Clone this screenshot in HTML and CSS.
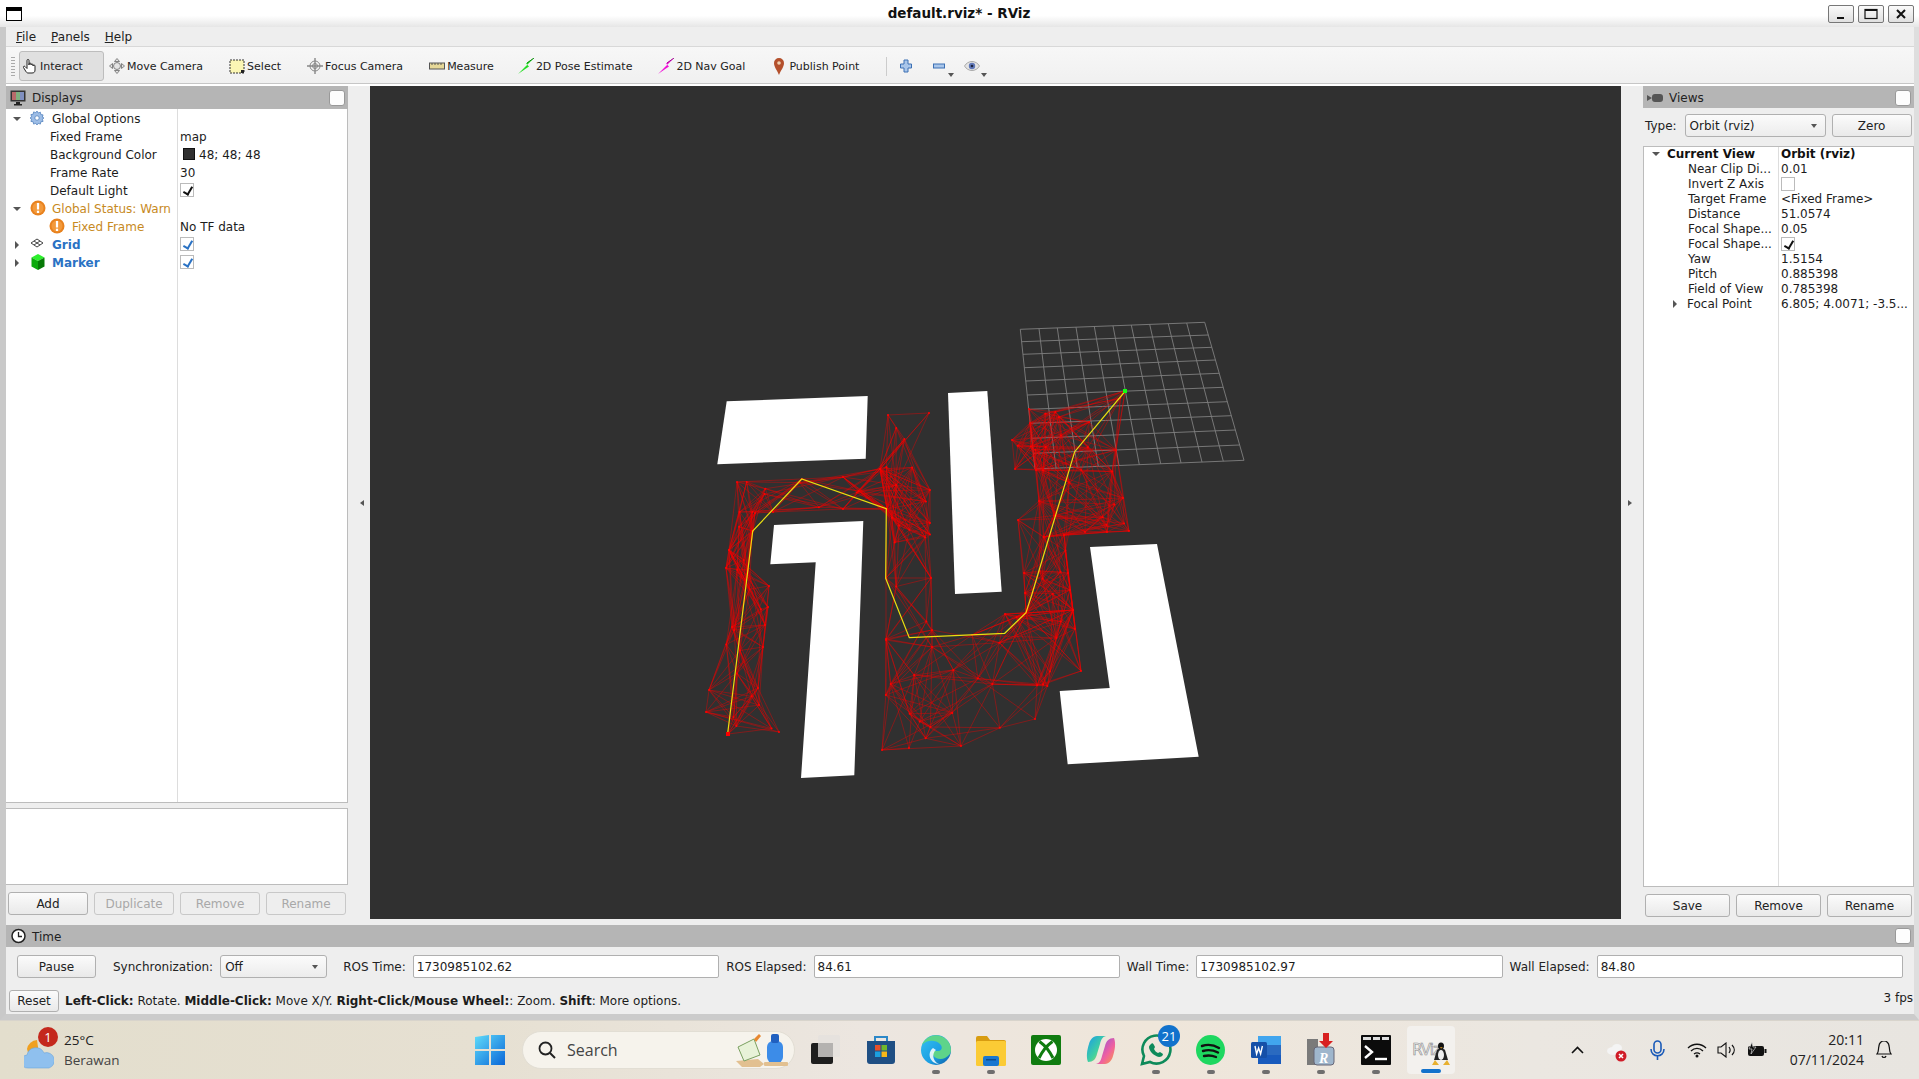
FILE: index.html
```html
<!DOCTYPE html>
<html lang="en">
<head>
<meta charset="utf-8">
<title>default.rviz* - RViz</title>
<link rel="stylesheet" href="styles.css">
</head>
<body>
<header class="titlebar">
  <span class="winicon"></span>
  <span class="wintitle">default.rviz* - RViz</span>
  <div class="winbtns">
    <span class="winbtn"><svg width="12" height="12" viewBox="0 0 12 12"><path d="M2 10h7" stroke="#111" stroke-width="2"/></svg></span>
    <span class="winbtn"><svg width="14" height="12" viewBox="0 0 14 12"><rect x="1" y="1.5" width="12" height="9" fill="none" stroke="#111" stroke-width="1.2"/><path d="M1 2h12" stroke="#111" stroke-width="2"/></svg></span>
    <span class="winbtn"><svg width="12" height="12" viewBox="0 0 12 12"><path d="M2 2l8 8M10 2l-8 8" stroke="#111" stroke-width="2"/></svg></span>
  </div>
</header>

<div class="window">
  <nav class="menubar">
    <span><u>F</u>ile</span><span><u>P</u>anels</span><span><u>H</u>elp</span>
  </nav>

  <div class="toolbar">
    <span class="grip"></span>
    <span class="tool active"><svg class="tic" viewBox="0 0 16 16"><path d="M5 8V2.500a1 1 0 0 1 2 0V7l0-1a1 1 0 0 1 2 0v1a1 1 0 0 1 2 0v1a1 1 0 0 1 2 0V12c0 2-1 3-3 3H6c-1 0-2-1-3-3L1.500 9.500c-.5-1 .7-1.800 1.500-1L5 10.500z" fill="#fff" stroke="#222" stroke-width="1"/></svg>Interact</span>
    <span class="tool"><svg class="tic" viewBox="0 0 16 16"><g fill="#e4e4e4" stroke="#777" stroke-width=".9"><path d="M8 .5l2.500 3h-5zM8 15.500l2.500-3h-5zM.5 8l3-2.500v5zM15.500 8l-3-2.500v5z"/><circle cx="8" cy="8" r="3.500"/></g></svg>Move Camera</span>
    <span class="tool"><svg class="tic" viewBox="0 0 16 16"><rect x="1" y="2" width="14" height="13" fill="#fbf6b4" stroke="#333" stroke-width="1" stroke-dasharray="2 1"/><rect x="12" y="12" width="3" height="3" fill="#222"/></svg>Select</span>
    <span class="tool"><svg class="tic" viewBox="0 0 16 16"><g fill="none" stroke="#888" stroke-width="1"><circle cx="8" cy="8" r="5"/><circle cx="8" cy="8" r="2.500"/><path d="M8 0v16M0 8h16" stroke-width="1.400"/></g></svg>Focus Camera</span>
    <span class="tool"><svg class="tic" viewBox="0 0 16 16"><rect x=".5" y="5" width="15" height="6" fill="#e6d898" stroke="#555"/><path d="M3 5v2M6 5v2M9 5v2M12 5v2" stroke="#555"/></svg>Measure</span>
    <span class="tool pose"><svg class="tic" viewBox="0 0 16 16"><path d="M16 0L7.500 8.500 0 16l8-5.500 3-2-3-3z" fill="#22dd22"/><path d="M16 0L9 5" stroke="#0a8a0a"/></svg>2D Pose Estimate</span>
    <span class="tool"><svg class="tic" viewBox="0 0 16 16"><path d="M16 0L7.500 8.500 0 16l8-5.500 3-2-3-3z" fill="#f010d8"/><path d="M16 0L9 5" stroke="#a00a90"/></svg>2D Nav Goal</span>
    <span class="tool pin"><svg class="tic" viewBox="0 0 16 18"><path d="M8 18C6 13 3 10 3 6a5 5 0 0 1 10 0c0 4-3 7-5 12z" fill="#b4502c"/><circle cx="8" cy="6" r="1.800" fill="#f0d0b0"/></svg>Publish Point</span>
    <span class="tsep"></span>
    <span class="vtool"><svg width="12" height="14" viewBox="0 0 12 14"><path d="M4 1h4v4h3.500v4H8v4H4V9H.5V5H4z" fill="#a9c6ea" stroke="#3c70b4"/></svg></span>
    <span class="vtool more"><svg width="12" height="6" viewBox="0 0 12 6"><rect x=".5" y="1" width="11" height="4" fill="#a9c6ea" stroke="#3c70b4"/></svg></span>
    <span class="vtool more wide"><svg width="16" height="12" viewBox="0 0 16 12"><path d="M.5 6C4 0 12 0 15.500 6 12 12 4 12 .5 6z" fill="#e4e4e4" stroke="#aaa"/><circle cx="8" cy="6" r="3.200" fill="#6078b8"/><circle cx="8" cy="6" r="1.300" fill="#1c2440"/></svg></span>
  </div>

  <div class="main">
    <section class="dock dock-left">
      <div class="dockhead">
        <svg class="headic" width="16" height="16" viewBox="0 0 16 16"><rect x=".5" y=".5" width="15" height="11" fill="#333"/><rect x="2" y="2" width="4" height="8" fill="#b86a6a"/><rect x="6" y="2" width="4" height="8" fill="#7fb07f"/><rect x="10" y="2" width="4" height="8" fill="#7f8fc0"/><path d="M6 12h4v2h2v1.500H4V14h2z" fill="#222"/></svg>
        <span class="headtext">Displays</span>
        <span class="floatbox"></span>
      </div>
      <div class="tree tree-left">
        <div class="nm lv0"><i class="exp open"></i><svg class="ric" viewBox="0 0 14 14"><path d="M7 0l1.200 2 2.200-.8.400 2.300 2.300.4-.8 2.200L14 7l-1.700 1.200.8 2.200-2.300.4-.4 2.300-2.200-.8L7 14l-1.200-1.700-2.200.8-.4-2.300-2.300-.4.8-2.200L0 7l1.700-1.200-.8-2.200 2.300-.4.4-2.300 2.200.8z" fill="#9dbde6" stroke="#4678b8" stroke-width=".7"/><circle cx="7" cy="7" r="2.200" fill="#fff" stroke="#4678b8" stroke-width=".7"/></svg>Global Options</div><div class="val"></div>
        <div class="nm lv1">Fixed Frame</div><div class="val">map</div>
        <div class="nm lv1">Background Color</div><div class="val"><span class="swatch"></span>48; 48; 48</div>
        <div class="nm lv1">Frame Rate</div><div class="val">30</div>
        <div class="nm lv1">Default Light</div><div class="val"><span class="cb ck"></span></div>
        <div class="nm lv0 warn"><i class="exp open"></i><svg class="ric big" viewBox="0 0 16 16"><circle cx="8" cy="8" r="7.500" fill="#e8821e"/><circle cx="8" cy="8" r="5.500" fill="#f39a3c"/><rect x="6.900" y="3" width="2.200" height="6.500" fill="#fff"/><rect x="6.900" y="10.700" width="2.200" height="2.300" fill="#fff"/></svg>Global Status: Warn</div><div class="val"></div>
        <div class="nm lv2 warn"><svg class="ric big" viewBox="0 0 16 16"><circle cx="8" cy="8" r="7.500" fill="#e8821e"/><circle cx="8" cy="8" r="5.500" fill="#f39a3c"/><rect x="6.900" y="3" width="2.200" height="6.500" fill="#fff"/><rect x="6.900" y="10.700" width="2.200" height="2.300" fill="#fff"/></svg>Fixed Frame</div><div class="val">No TF data</div>
        <div class="nm lv0 link"><i class="exp"></i><svg class="ric" viewBox="0 0 14 14"><g fill="none" stroke="#444" stroke-width="1"><path d="M7 2l6 4-6 4-6-4z"/><path d="M4 4l6 4M10 4L4 8"/></g></svg>Grid</div><div class="val"><span class="cb ck blue"></span></div>
        <div class="nm lv0 link"><i class="exp"></i><svg class="ric big" viewBox="0 0 14 16"><path d="M7 0l6.500 3.500L7 7 .5 3.500z" fill="#2cf02c"/><path d="M.5 3.500L7 7v9L.5 12.500z" fill="#0caa0c"/><path d="M13.500 3.500L7 7v9l6.500-3.500z" fill="#067a06"/></svg>Marker</div><div class="val"><span class="cb ck blue"></span></div>
      </div>
      <div class="split-h"></div>
      <div class="descbox"></div>
      <div class="btnrow">
        <span class="btn">Add</span><span class="btn off">Duplicate</span><span class="btn off">Remove</span><span class="btn off">Rename</span>
      </div>
    </section>

    <div class="handle hl"><i class="arrow-l"></i></div>

    <div class="view">
      <svg class="scene" viewBox="370 86 1251 833" width="1251" height="833">
        <g id="grid"></g>
        <g fill="#fff">
          <polygon points="726.700,401.300 867.700,396 865.700,458.700 717.300,464.300"/>
          <polygon points="774,525 863.300,521 854.300,775.300 801,778 815.700,562.300 770.300,564.300"/>
          <polygon points="948,393 987.300,391 1001.700,591.700 955,594"/>
          <polygon points="1090,547 1157,544 1198.700,756.700 1067.700,764.300 1059.700,691 1109.700,688"/>
        </g>
        <g id="mesh"></g>
        <polyline id="route" points="727.700,733.300 752.700,531 801.700,479 886.300,508.700 885.700,578.300 909.300,637.700 1004.700,633.300 1026,612.700 1031.700,595 1074.700,451.700 1125.300,391"/>
        <rect x="726" y="732" width="4" height="4" fill="#f00"/>
        <rect x="1123" y="389" width="4" height="4" fill="#1f1"/>
      </svg>
    </div>

    <div class="handle hr"><i class="arrow-r"></i></div>

    <section class="dock dock-right">
      <div class="dockhead short">
        <svg class="headic viewsic" width="16" height="8" viewBox="0 0 16 8"><path d="M0 1l5 3-5 3z" fill="#555"/><rect x="5" y="0" width="11" height="8" rx="3" fill="#555"/></svg>
        <span class="headtext">Views</span>
        <span class="floatbox"></span>
      </div>
      <div class="typerow">
        <span class="lbl">Type:</span>
        <span class="combo wide">Orbit (rviz)<i class="caret"></i></span>
        <span class="btn zero">Zero</span>
      </div>
      <div class="tree tree-right">
        <div class="nm rl0 strong"><i class="exp open"></i>Current View</div><div class="val strong">Orbit (rviz)</div>
        <div class="nm rl1">Near Clip Di...</div><div class="val">0.01</div>
        <div class="nm rl1">Invert Z Axis</div><div class="val"><span class="cb"></span></div>
        <div class="nm rl1">Target Frame</div><div class="val">&lt;Fixed Frame&gt;</div>
        <div class="nm rl1">Distance</div><div class="val">51.0574</div>
        <div class="nm rl1">Focal Shape...</div><div class="val">0.05</div>
        <div class="nm rl1">Focal Shape...</div><div class="val"><span class="cb ck"></span></div>
        <div class="nm rl1">Yaw</div><div class="val">1.5154</div>
        <div class="nm rl1">Pitch</div><div class="val">0.885398</div>
        <div class="nm rl1">Field of View</div><div class="val">0.785398</div>
        <div class="nm rl1 sub"><i class="exp"></i>Focal Point</div><div class="val">6.805; 4.0071; -3.5...</div>
      </div>
      <div class="btnrow right">
        <span class="btn">Save</span><span class="btn">Remove</span><span class="btn">Rename</span>
      </div>
    </section>
  </div>

  <section class="timepanel">
    <div class="timehead">
      <svg class="clock" width="15" height="16" viewBox="0 0 15 16"><circle cx="7.500" cy="8" r="6.500" fill="#fff" stroke="#222" stroke-width="1.500"/><path d="M7.500 4v4.500H11" fill="none" stroke="#222" stroke-width="1.300"/></svg>
      <span class="headtext">Time</span>
      <span class="floatbox"></span>
    </div>
    <div class="timerow">
      <span class="btn pause">Pause</span>
      <span class="lbl sync">Synchronization:</span>
      <span class="combo sel">Off<i class="caret"></i></span>
      <span class="lbl ros">ROS Time:</span><span class="input">1730985102.62</span>
      <span class="lbl">ROS Elapsed:</span><span class="input">84.61</span>
      <span class="lbl">Wall Time:</span><span class="input">1730985102.97</span>
      <span class="lbl">Wall Elapsed:</span><span class="input">84.80</span>
    </div>
    <div class="hintrow">
      <span class="btn reset">Reset</span>
      <span class="hint"><b>Left-Click:</b> Rotate. <b>Middle-Click:</b> Move X/Y. <b>Right-Click/Mouse Wheel:</b>: Zoom. <b>Shift</b>: More options.</span>
      <span class="fps">3 fps</span>
    </div>
  </section>
</div>

<footer class="taskbar">
  <div class="weather">
    <div class="wicon">
      <svg width="30" height="36" viewBox="0 0 30 36"><path d="M3 14a11 11 0 0 1 10-9l2 14-10 2z" fill="#f0a020"/><path d="M4 33a6.500 6.500 0 0 1-1-13 9 9 0 0 1 17-2 7.500 7.500 0 0 1 5 15z" fill="#8fc0ee" stroke="#6aa4dc" stroke-width=".6"/></svg>
      <span class="wbadge">1</span>
    </div>
    <div class="wtext"><span>25°C</span><span class="wsub">Berawan</span></div>
  </div>
  <svg class="startlogo" width="30" height="30" viewBox="0 0 30 30"><defs><linearGradient id="wg" x1="0" y1="0" x2="1" y2="1"><stop offset="0" stop-color="#5fdcfa"/><stop offset="1" stop-color="#0a66d8"/></linearGradient></defs><path d="M0 2l14-2v14H0zM16 0l14 0v14H16zM0 16h14v14H0zM16 16h14v14H16z" fill="url(#wg)"/></svg>
  <div class="searchpill">
    <svg width="18" height="18" viewBox="0 0 18 18"><circle cx="7.500" cy="7.500" r="6" fill="none" stroke="#222" stroke-width="1.800"/><path d="M12 12l5 5" stroke="#222" stroke-width="2"/></svg>
    <span class="searchtext">Search</span>
    <svg class="searchart" width="54" height="34" viewBox="0 0 54 34"><path d="M0 28l22-2 6 5-4 3H6z" fill="#e2c090"/><path d="M2 14l16-8 6 16-16 6z" fill="#e8f2d8" stroke="#7aa060"/><path d="M18 6l5-5 2 2-5 6z" fill="#e88830"/><rect x="31" y="8" width="16" height="22" rx="6" fill="#3c8ce8"/><rect x="35" y="1" width="8" height="9" rx="2" fill="#2060c0"/><rect x="28" y="29" width="24" height="4" rx="1" fill="#e2c090"/></svg>
  </div>
  <div class="apps">
    <span class="app"><svg width="30" height="30" viewBox="0 0 30 30"><rect x="7" y="0" width="22" height="22" rx="2" fill="#e6e2de"/><rect x="0" y="8" width="22" height="21" rx="2" fill="#1e1e1e"/><rect x="7" y="8" width="15" height="14" fill="#b4b2b0"/></svg></span>
    <span class="app"><svg width="30" height="30" viewBox="0 0 30 30"><path d="M9 6V2h12v4" fill="none" stroke="#2c88c8" stroke-width="2"/><path d="M1 6h28v20a3 3 0 0 1-3 3H4a3 3 0 0 1-3-3z" fill="#1f4f84"/><rect x="9" y="10" width="5.500" height="5.500" fill="#e8502a"/><rect x="15.500" y="10" width="5.500" height="5.500" fill="#72b82c"/><rect x="9" y="16.500" width="5.500" height="5.500" fill="#1ca0e0"/><rect x="15.500" y="16.500" width="5.500" height="5.500" fill="#f8b818"/></svg></span>
    <span class="app dot"><svg width="32" height="32" viewBox="0 0 32 32"><defs><linearGradient id="eg" x1="0" y1="0" x2="1" y2="1"><stop offset="0" stop-color="#35c1f1"/><stop offset=".6" stop-color="#1b9de2"/><stop offset="1" stop-color="#0c59a4"/></linearGradient></defs><circle cx="16" cy="16" r="15" fill="url(#eg)"/><path d="M31 16a15 15 0 0 0-29-5c4-5 13-6 18-1 3 3 2 7-2 7H14c-2 0-2 2-1 4 2 4 8 5 12 3 4-2 6-5 6-8z" fill="#5ed48a"/><path d="M13 14c-4 3-5 9 0 14 2 1 4 2 6 2-7-3-7-11-3-14z" fill="#fff" opacity=".85"/></svg></span>
    <span class="app dot"><svg width="30" height="32" viewBox="0 0 30 32"><path d="M0 4a2 2 0 0 1 2-2h9l3 4h14a2 2 0 0 1 2 2v4H0z" fill="#d89c10"/><rect y="7" width="30" height="25" rx="1.500" fill="#fbcb35"/><rect x="7" y="22" width="16" height="10" rx="2" fill="#1a78d0"/><rect x="10" y="25" width="10" height="1.500" fill="#0d4c90"/></svg></span>
    <span class="app"><svg width="30" height="30" viewBox="0 0 30 30"><rect width="30" height="30" rx="2" fill="#107c10"/><circle cx="15" cy="15" r="11" fill="#fff"/><path d="M8.500 6.500C12 9 18 15 22 23M21.500 6.500C18 9 12 15 8 23" fill="none" stroke="#107c10" stroke-width="3"/></svg></span>
    <span class="app"><svg width="30" height="30" viewBox="0 0 30 30"><defs><linearGradient id="cg1" x1="0" y1="0" x2="1" y2="1"><stop offset="0" stop-color="#1a9ce8"/><stop offset=".55" stop-color="#40d0a0"/><stop offset="1" stop-color="#f0d030"/></linearGradient><linearGradient id="cg2" x1="0" y1="0" x2="1" y2="1"><stop offset="0" stop-color="#7a50e8"/><stop offset=".6" stop-color="#f060a0"/><stop offset="1" stop-color="#f8a040"/></linearGradient></defs><path d="M11 1h9c-4 1-5 4-6 8l-3 10c-1 5-4 8-9 8-2-5-1-12 1-18 1-4 4-8 8-8z" fill="url(#cg1)"/><path d="M19 29h-9c4-1 5-4 6-8l3-10c1-5 4-8 9-8 2 5 1 12-1 18-1 4-4 8-8 8z" fill="url(#cg2)"/></svg></span>
    <span class="app dot wa"><svg width="32" height="32" viewBox="0 0 32 32"><path d="M2 30l2-8a14 14 0 1 1 6 6z" fill="none" stroke="#0e8a5a" stroke-width="2.600"/><path d="M11 10c1-1 2-1 3 1l1 2-1 2c1 2 2 3 4 4l2-1 3 2c0 2-2 3-4 3-5-1-10-6-10-10 0-1 1-2 2-3z" fill="#0e8a5a"/></svg><span class="wabadge">21</span></span>
    <span class="app dot"><svg width="29" height="30" viewBox="0 0 29 30"><ellipse cx="14.500" cy="15" rx="14.500" ry="15" fill="#1ed760"/><path d="M6 11c6-2 12-1 17 2M7 16c5-1.500 10-1 15 1.500M8 21c4-1 8-.7 12 1" fill="none" stroke="#111" stroke-width="2.400" stroke-linecap="round"/></svg></span>
    <span class="app dot"><svg width="30" height="30" viewBox="0 0 30 30"><rect x="7" y="1" width="23" height="28" rx="1.500" fill="#2a6ac0"/><rect x="7" y="1" width="23" height="9" fill="#41a5ee"/><rect x="7" y="20" width="23" height="9" fill="#185abd"/><rect x="0" y="7" width="16" height="16" rx="1.500" fill="#1550a8"/><path d="M3 11l1.600 8 2-6 2 6 1.800-8" fill="none" stroke="#fff" stroke-width="1.400" transform="translate(1 0)"/></svg></span>
    <span class="app dot"><svg width="30" height="34" viewBox="0 0 30 34"><rect x="1" y="6" width="11" height="26" fill="#7a7a7a"/><rect x="8" y="14" width="20" height="18" rx="3" fill="#9fb6cc" stroke="#667"/><path d="M17 0h6v8h4l-7 7-7-7h4z" fill="#d82020"/><text x="13" y="30" class="rmark">R</text></svg></span>
    <span class="app dot"><svg width="30" height="30" viewBox="0 0 30 30"><rect width="30" height="30" rx="1" fill="#0c0c0c"/><rect x="2" y="2" width="8" height="3" fill="#ddd"/><rect x="12" y="2" width="7" height="3" fill="#ddd"/><rect x="21" y="2" width="7" height="3" fill="#ddd"/><path d="M4 11l7 6-7 6" fill="none" stroke="#fff" stroke-width="2.400"/><path d="M14 24h12" stroke="#fff" stroke-width="2.400"/></svg></span>
    <span class="app current"><span class="rvizword">RViz</span><svg class="tux" width="18" height="24" viewBox="0 0 18 24"><ellipse cx="9" cy="4" rx="3" ry="3.500" fill="#111"/><path d="M5 8c2-2 6-2 8 0l3 10H2z" fill="#222"/><ellipse cx="9" cy="13" rx="3" ry="5" fill="#eee"/><path d="M8 5l3 .5-2 1z" fill="#e8a020"/><path d="M3 18L0 23h7zM15 18l3 5h-7z" fill="#e8b030"/></svg><span class="underline"></span></span>
  </div>
  <div class="tray">
    <svg class="tr-chev" width="13" height="8" viewBox="0 0 13 8"><path d="M1 7l5.500-5.500L12 7" fill="none" stroke="#111" stroke-width="1.600"/></svg>
    <svg class="tr-cloud" width="20" height="18" viewBox="0 0 20 18"><ellipse cx="6" cy="7" rx="6" ry="4" fill="#f4f4f4"/><ellipse cx="10" cy="4" rx="5" ry="4" fill="#f4f4f4"/><circle cx="14" cy="12" r="5.500" fill="#d01c28"/><path d="M12 10l4 4M16 10l-4 4" stroke="#fff" stroke-width="1.500"/></svg>
    <svg class="tr-mic" width="15" height="20" viewBox="0 0 15 20"><rect x="4" y="1" width="7" height="12" rx="3.500" fill="none" stroke="#1a5ab8" stroke-width="1.600"/><path d="M1 9c0 9 13 9 13 0M7.500 15v5" fill="none" stroke="#1a5ab8" stroke-width="1.600"/></svg>
    <svg class="tr-wifi" width="20" height="16" viewBox="0 0 20 16"><path d="M1 6c5-5 13-5 18 0M4 9c3.500-3.500 8.500-3.500 12 0M7 12c2-1.500 4-1.500 6 0" fill="none" stroke="#111" stroke-width="1.300"/><circle cx="10" cy="14" r="1.500" fill="#111"/></svg>
    <svg class="tr-vol" width="20" height="16" viewBox="0 0 20 16"><path d="M1 5h3l5-4v14l-5-4H1z" fill="none" stroke="#111" stroke-width="1.100"/><path d="M12 5c1.500 2 1.500 4 0 6M15 3c3 3 3 7 0 10" fill="none" stroke="#111" stroke-width="1.200"/></svg>
    <svg class="tr-bat" width="20" height="16" viewBox="0 0 20 16"><rect x="1" y="4" width="16" height="10" rx="2" fill="#111"/><rect x="17.500" y="7" width="2" height="4" fill="#111"/><path d="M5 0L2 7h3l-1 5 5-7H6z" fill="#111" stroke="#eee" stroke-width=".6"/></svg>
    <div class="clocktext"><span>20:11</span><span>07/11/2024</span></div>
    <svg class="tr-bell" width="16" height="18" viewBox="0 0 16 18"><path d="M1 13c2-2 1-5 2-8a5 5 0 0 1 10 0c1 3 0 6 2 8z" fill="none" stroke="#111" stroke-width="1.200"/><path d="M6 15c.5 2 3.500 2 4 0" fill="none" stroke="#111" stroke-width="1.200"/></svg>
  </div>
</footer>
<script src="script.js"></script>
</body>
</html>
```

FILE: styles.css
```css
* { box-sizing: border-box; }
html, body { margin: 0; height: 100%; overflow: hidden; }
body {
  width: 1919px;
  height: 1079px;
  display: flex;
  flex-direction: column;
  font: 12px/1 "DejaVu Sans", sans-serif;
  color: #1c1c1c;
  background: #eee;
}

/* title bar */
.titlebar {
  height: 27px;
  flex: none;
  display: flex;
  align-items: center;
  justify-content: space-between;
  padding: 0 5px 0 6px;
  background: linear-gradient(#fff 0, #fff 58%, #e6e6e6 100%);
}
.winicon {
  width: 16px;
  height: 14px;
  border: 1px solid #000;
  border-top-width: 4px;
  background: #fff;
  margin-top: 1px;
}
.wintitle {
  font-weight: bold;
  font-size: 13.500px;
  color: #111;
  margin-left: 68px;
  padding-top: 1px;
}
.winbtns { display: flex; gap: 4px; margin-top: 1px; }
.winbtn {
  width: 26px;
  height: 18px;
  border: 1px solid #777;
  border-radius: 2px;
  background: linear-gradient(#fafafa, #e0e0e0);
  display: flex;
  align-items: center;
  justify-content: center;
}

/* window frame */
.window {
  height: 993px;
  flex: none;
  display: flex;
  flex-direction: column;
  border-left: 6px solid #c9c9c9;
  border-right: 5px solid #dedede;
  border-bottom: 6px solid #cbcbcb;
  background: #eee;
}
.menubar {
  height: 20px;
  flex: none;
  display: flex;
  align-items: center;
  padding: 1px 0 0 10px;
  border-bottom: 1px solid #d8d8d8;
}
.menubar span { margin-right: 15px; color: #222; }
.toolbar {
  height: 39px;
  flex: none;
  display: flex;
  align-items: center;
  padding: 1px 0 0 5px;
  background: linear-gradient(#f7f7f7, #f0f0f0);
  border-bottom: 2px solid #fff;
  box-shadow: inset 0 -1px 0 #c6c6c6;
}
.grip {
  width: 4px;
  height: 20px;
  margin-right: 4px;
  background: radial-gradient(circle, #aaa 0.6px, transparent 0.8px) 0 0 / 2px 3px;
}
.tool {
  display: flex;
  align-items: center;
  gap: 2px;
  height: 30px;
  padding: 0 26px 0 0;
  color: #222;
  font-size: 11px;
}
.tool.pose { margin-left: -2px; }
.tool.active {
  background: #e0e0e0;
  border: 1px solid #bdbdbd;
  border-radius: 3px;
  padding: 0 20px 0 2px;
  margin-right: 5px;
}
.tic { width: 16px; height: 16px; flex: none; }
.pin .tic { height: 18px; }
.tsep { width: 1px; height: 19px; background: #ccc; margin: 0 13px 0 1px; }
.vtool {
  width: 33px;
  display: flex;
  position: relative;
  height: 20px;
  align-items: center;
}
.vtool.wide { margin-left: -2px; }
.vtool.more::after {
  content: "";
  position: absolute;
  left: 15px;
  bottom: -1px;
  border: 3px solid transparent;
  border-top: 4px solid #555;
  border-bottom: 0;
}
.vtool.wide::after { left: 17px; }

/* main area */
.main {
  height: 839px;
  flex: none;
  display: flex;
  align-items: flex-start;
}
.dock { display: flex; flex-direction: column; height: 100%; }
.dock-left { width: 342px; }
.dock-right { width: 271px; }
.dockhead, .timehead {
  height: 23px;
  flex: none;
  display: flex;
  align-items: center;
  background: #b5b5b5;
  padding: 1px 3px 0 4px;
  color: #222;
}
.dockhead.short { height: 22px; padding-top: 2px; }
.dockhead .floatbox, .timehead .floatbox { margin-top: -1px; }
.headic { flex: none; margin-right: 6px; }
.headtext { flex: 1; }
.floatbox {
  width: 16px;
  height: 16px;
  background: #fdfdfd;
  border: 1px solid #999;
  border-radius: 3px;
}
.tree {
  display: grid;
  align-content: start;
  background-color: #fff;
  background-repeat: no-repeat;
  border: 1px solid #bcbcbc;
}
.tree-left {
  height: 694px;
  flex: none;
  grid-template-columns: 171px 1fr;
  grid-auto-rows: 18px;
  border-width: 0 1px 1px 0;
  background-image: linear-gradient(#ddd, #ddd);
  background-size: 1px 100%;
  background-position: 171px 0;
}
.tree-left .nm, .tree-left .val { padding-top: 2px; }
.tree-left .cb { margin-top: -3px; }
.tree-right {
  height: 741px;
  flex: none;
  grid-template-columns: 134px 1fr;
  grid-auto-rows: 15px;
  background-image: linear-gradient(#ddd, #ddd);
  background-size: 1px 100%;
  background-position: 134px 0;
}
.tree-right .nm, .tree-right .val { margin-top: -1px; }
.tree-right .cb { margin-top: -1px; }
.nm { display: flex; align-items: center; white-space: nowrap; position: relative; }
.val { display: flex; align-items: center; padding-left: 3px; white-space: nowrap; }
.lv0 { padding-left: 7px; }
.lv1 { padding-left: 44px; }
.lv2 { padding-left: 42px; }
.warn { color: #c78a1e; }
.link { color: #2a72c4; font-weight: bold; }
.strong { font-weight: bold; color: #111; }
.exp {
  width: 8px;
  height: 8px;
  flex: none;
  margin-right: 8px;
  position: relative;
}
.exp::before {
  content: "";
  position: absolute;
  left: 2px;
  top: 0;
  border: 4px solid transparent;
  border-left: 4px solid #555;
  border-right: 0;
}
.exp.open::before {
  left: 0;
  top: 2px;
  border: 4px solid transparent;
  border-top: 4px solid #555;
  border-bottom: 0;
}
.ric { width: 14px; height: 14px; flex: none; margin: -2px 8px 0 1px; }
.ric.big { width: 16px; height: 16px; margin: -2px 6px 0 1px; }
.lv2 .ric.big { margin-right: 7px; }
.swatch {
  width: 12px;
  height: 12px;
  background: #303030;
  border: 1px solid #111;
  margin: -2px 4px 0 3px;
}
.cb {
  width: 14px;
  height: 14px;
  border: 1px solid #bbb;
  background: #fff;
  position: relative;
  display: block;
}
.cb.ck::after {
  content: "";
  position: absolute;
  left: 4px;
  top: 1px;
  width: 4px;
  height: 8px;
  border: solid #111;
  border-width: 0 2px 2px 0;
  transform: rotate(30deg);
}
.cb.ck.blue::after { border-color: #2a72c4; }
.rl0 { padding-left: 8px; }
.rl0 .exp { margin-right: 7px; }
.rl1 { padding-left: 44px; }
.rl1.sub { padding-left: 27px; }
.rl1.sub .exp { margin-right: 8px; }
.split-h { height: 5px; flex: none; }
.descbox { height: 77px; flex: none; background: #fff; border: 1px solid #bcbcbc; border-left: 0; }
.btnrow {
  display: flex;
  gap: 6px;
  margin-top: 7px;
  padding: 0 2px;
  height: 23px;
  flex: none;
}
.btnrow .btn { flex: 1; }
.btn {
  display: flex;
  align-items: center;
  justify-content: center;
  border: 1px solid #b0b0b0;
  border-radius: 3px;
  background: linear-gradient(#fbfbfb, #e9e9e9);
  color: #222;
}
.btn.off { color: #a8a8a8; border-color: #c8c8c8; background: #eee; }
.handle {
  height: 100%;
  flex: none;
  display: flex;
  align-items: center;
  justify-content: center;
  padding-bottom: 6px;
}
.hl { width: 22px; padding-left: 6px; }
.hr { width: 22px; padding-right: 5px; }
.arrow-l, .arrow-r { display: block; border: 3.500px solid transparent; }
.arrow-l { border-right: 4px solid #555; border-left: 0; }
.arrow-r { border-left: 4px solid #555; border-right: 0; }
.view { width: 1251px; height: 833px; flex: none; background: #303030; }
.scene { display: block; }
#route { fill: none; stroke: #eadf10; stroke-width: 1.200; }
.gl { stroke: #7f7f7f; stroke-width: .9; }
.ml { stroke: #f00000; stroke-opacity: .6; stroke-width: .7; }
.mn { fill: #ff0000; }

.typerow {
  display: flex;
  align-items: center;
  height: 23px;
  margin: 6px 2px 9px 2px;
}
.lbl { color: #222; white-space: nowrap; }
.combo {
  display: flex;
  align-items: center;
  justify-content: space-between;
  height: 23px;
  padding: 0 8px 0 4px;
  border: 1px solid #b0b0b0;
  border-radius: 3px;
  background: linear-gradient(#fbfbfb, #ececec);
}
.combo.wide { width: 141px; margin-left: 8px; }
.caret { border: 3.500px solid transparent; border-top: 4px solid #555; border-bottom: 0; }
.zero { width: 80px; height: 23px; margin-left: 6px; }

/* time panel */
.timepanel { height: 89px; flex: none; }
.timehead { height: 22px; padding-left: 5px; padding-right: 3px; }
.clock { flex: none; margin-right: 6px; margin-top: -1px; }
.timerow {
  display: flex;
  align-items: center;
  height: 23px;
  margin-top: 8px;
  padding: 0 11px 0 11px;
  gap: 7px;
}
.pause { width: 79px; height: 23px; margin-right: 10px; }
.sel { width: 107px; height: 23px; }
.ros { margin-left: 9px; }
.input {
  flex: 1;
  min-width: 0;
  height: 23px;
  display: flex;
  align-items: center;
  padding-left: 3px;
  background: #fff;
  border: 1px solid #b0b0b0;
  border-radius: 2px;
}
.hintrow {
  display: flex;
  align-items: center;
  height: 22px;
  margin-top: 12px;
  padding: 0 1px 0 3px;
}
.reset { width: 50px; height: 22px; margin-right: 6px; }
.hint { flex: 1; }
.fps { padding-bottom: 6px; }

/* task bar */
.taskbar {
  height: 59px;
  flex: none;
  display: flex;
  align-items: center;
  font-family: "Open Sans", sans-serif;
  font-size: 13.500px;
  color: #222;
  background: linear-gradient(90deg, #e3decd 0, #e6e0d2 25%, #ece6e0 45%, #efe6da 60%, #ebe7e1 80%, #e8e5e0 100%);
  border-top: 1px solid #d8d4cc;
}
.weather { display: flex; align-items: center; width: 475px; padding-left: 24px; flex: none; }
.wicon { position: relative; width: 30px; height: 36px; margin-right: 10px; margin-top: 6px; }
.wbadge {
  position: absolute;
  left: 14px;
  top: -8px;
  width: 20px;
  height: 20px;
  border-radius: 50%;
  background: #c4281c;
  color: #fff;
  font-size: 13px;
  display: flex;
  align-items: center;
  justify-content: center;
}
.wtext { display: flex; flex-direction: column; gap: 4px; line-height: 16px; }
.wsub { color: #444; }
.startlogo { flex: none; }
.searchpill {
  width: 273px;
  height: 38px;
  flex: none;
  margin-left: 17px;
  padding: 0 4px 0 15px;
  border-radius: 19px;
  background: #f6f3ec;
  border: 1px solid #e2ded4;
  display: flex;
  align-items: center;
  position: relative;
}
.searchtext { margin-left: 11px; font-size: 16px; color: #444; flex: 1; }
.apps { display: flex; align-items: center; margin-left: 3px; flex: none; }
.app {
  width: 55px;
  height: 48px;
  flex: none;
  display: flex;
  align-items: center;
  justify-content: center;
  position: relative;
}
.app.dot::after {
  content: "";
  position: absolute;
  bottom: 0;
  left: 24px;
  width: 8px;
  height: 4px;
  border-radius: 2px;
  background: #6e6e6e;
}
.wabadge {
  position: absolute;
  left: 30px;
  top: -1px;
  width: 22px;
  height: 22px;
  border-radius: 50%;
  background: #1272cc;
  color: #fff;
  font-size: 13px;
  display: flex;
  align-items: center;
  justify-content: center;
}
.rmark { font: italic bold 14px "Liberation Serif", serif; fill: #fff; }
.app.current { background: #f3f1ee; border-radius: 4px; width: 48px; margin-left: 4px; }
.rvizword {
  font-family: "DejaVu Sans", sans-serif;
  font-size: 15px;
  letter-spacing: -1px;
  color: #f2f2f2;
  -webkit-text-stroke: 0.6px #8a8a8a;
  margin-right: -8px;
}
.tux { margin-top: 8px; }
.underline {
  position: absolute;
  left: 14px;
  bottom: 1px;
  width: 20px;
  height: 4px;
  border-radius: 2px;
  background: #1272cc;
}
.tray { display: flex; align-items: center; flex: none; margin-left: 116px; }
.tray svg { flex: none; }
.tr-cloud { margin-left: 23px; margin-top: 6px; }
.tr-mic { margin-left: 23px; }
.tr-wifi { margin-left: 22px; }
.tr-vol { margin-left: 10px; }
.tr-bat { margin-left: 10px; }
.clocktext {
  width: 97px;
  display: flex;
  flex-direction: column;
  align-items: flex-end;
  gap: 4px;
  line-height: 16px;
  font-size: 14px;
}
.tr-bell { margin-left: 12px; }
```

FILE: script.js
```js
(function () {
  var NS = "http://www.w3.org/2000/svg";
  var seed = 20;
  function rnd() {
    seed = (seed + 0x6d2b79f5) | 0;
    var t = Math.imul(seed ^ (seed >>> 15), 1 | seed);
    t = (t + Math.imul(t ^ (t >>> 7), 61 | t)) ^ t;
    return ((t ^ (t >>> 14)) >>> 0) / 4294967296;
  }
  function addLine(parent, a, b, cls) {
    var l = document.createElementNS(NS, "line");
    l.setAttribute("x1", a[0].toFixed(1));
    l.setAttribute("y1", a[1].toFixed(1));
    l.setAttribute("x2", b[0].toFixed(1));
    l.setAttribute("y2", b[1].toFixed(1));
    l.setAttribute("class", cls);
    parent.appendChild(l);
  }

  /* ground grid: 10 x 10 cells, with the rows squeezed by perspective */
  var grid = document.getElementById("grid");
  var leftY = [58, 95, 133, 173, 213, 255, 298, 340, 385, 430, 477];
  var rightY = [37, 75, 112, 150, 190, 232, 275, 317, 360, 405, 451];
  var topX = [61, 117, 172, 228, 283, 339, 394, 449, 505, 560, 614];
  var botX = [105, 168, 232, 295, 357, 418, 482, 543, 606, 670, 732];
  function z5(x, y) { return [1000 + x / 3, 310 + y / 3]; }
  for (var i = 0; i <= 10; i++) {
    var lx = 61 + (105 - 61) * (leftY[i] - 58) / (477 - 58);
    var rx = 614 + (732 - 614) * (rightY[i] - 37) / (451 - 37);
    addLine(grid, z5(lx, leftY[i]), z5(rx, rightY[i]), "gl");
    var ty = 58 + (37 - 58) * i / 10;
    var by = 477 + (451 - 477) * i / 10;
    addLine(grid, z5(topX[i], ty), z5(botX[i], by), "gl");
  }

  /* roadmap: random samples in the free corridors, joined when the edge stays inside */
  var regions = [
    { n: 14, p: [[728,734],[779,732],[758,688],[763,647],[765,625],[768,607],[769,586],[748,570],[752,531],[729,550],[726,568],[732,627],[709,690],[706,712]] },
    { n: 10, p: [[737,482],[802,479],[843,477],[880,469],[887,509],[843,509],[773,512],[755,513],[753,531],[729,550]] },
    { n: 14, p: [[888,415],[929,413],[930,490],[930,523],[931,578],[932,647],[886,640],[886,578],[887,509],[880,469]] },
    { n: 20, p: [[886,639],[882,750],[909,748],[961,746],[1035,719],[1081,671],[1075,629],[1073,610],[1026,613],[1005,614],[972,635],[932,630]] },
    { n: 26, p: [[1029,409],[1125,391],[1116,450],[1123,498],[1129,531],[1107,532],[1085,532],[1064,535],[1068,573],[1070,590],[1073,610],[1026,613],[1025,593],[1024,573],[1018,520],[1039,501],[1036,470],[1015,469],[1012,440],[1030,423]] }
  ];
  function inside(pt, poly) {
    var c = false;
    for (var i = 0, j = poly.length - 1; i < poly.length; j = i++) {
      var a = poly[i], b = poly[j];
      if ((a[1] > pt[1]) !== (b[1] > pt[1]) &&
          pt[0] < (b[0] - a[0]) * (pt[1] - a[1]) / (b[1] - a[1]) + a[0]) c = !c;
    }
    return c;
  }
  function inFree(pt) {
    for (var r = 0; r < regions.length; r++) {
      var q = regions[r].p;
      for (var dx = -2; dx <= 2; dx += 4) {
        for (var dy = -2; dy <= 2; dy += 4) {
          if (inside([pt[0] + dx, pt[1] + dy], q)) return true;
        }
      }
    }
    return false;
  }
  var nodes = [];
  regions.forEach(function (r) {
    var k;
    for (k = 0; k < r.p.length; k++) nodes.push(r.p[k]);
    var xs = r.p.map(function (a) { return a[0]; });
    var ys = r.p.map(function (a) { return a[1]; });
    var x0 = Math.min.apply(null, xs), x1 = Math.max.apply(null, xs);
    var y0 = Math.min.apply(null, ys), y1 = Math.max.apply(null, ys);
    var placed = 0, guard = 0;
    while (placed < r.n && guard++ < 5000) {
      var p = [x0 + rnd() * (x1 - x0), y0 + rnd() * (y1 - y0)];
      if (inside(p, r.p)) { nodes.push(p); placed++; }
    }
  });
  var mesh = document.getElementById("mesh");
  var R = 85;
  for (var a = 0; a < nodes.length; a++) {
    for (var b = a + 1; b < nodes.length; b++) {
      var dx = nodes[a][0] - nodes[b][0], dy = nodes[a][1] - nodes[b][1];
      var d = Math.sqrt(dx * dx + dy * dy);
      if (d < 1 || d > R) continue;
      if (rnd() < 0.3) continue;
      var ok = true;
      for (var t = 0.1; t < 0.95 && ok; t += 0.1) {
        ok = inFree([nodes[a][0] - dx * t, nodes[a][1] - dy * t]);
      }
      if (ok) addLine(mesh, nodes[a], nodes[b], "ml");
    }
  }
  nodes.forEach(function (n) {
    var c = document.createElementNS(NS, "circle");
    c.setAttribute("cx", n[0].toFixed(1));
    c.setAttribute("cy", n[1].toFixed(1));
    c.setAttribute("r", "1");
    c.setAttribute("class", "mn");
    mesh.appendChild(c);
  });
})();
```
